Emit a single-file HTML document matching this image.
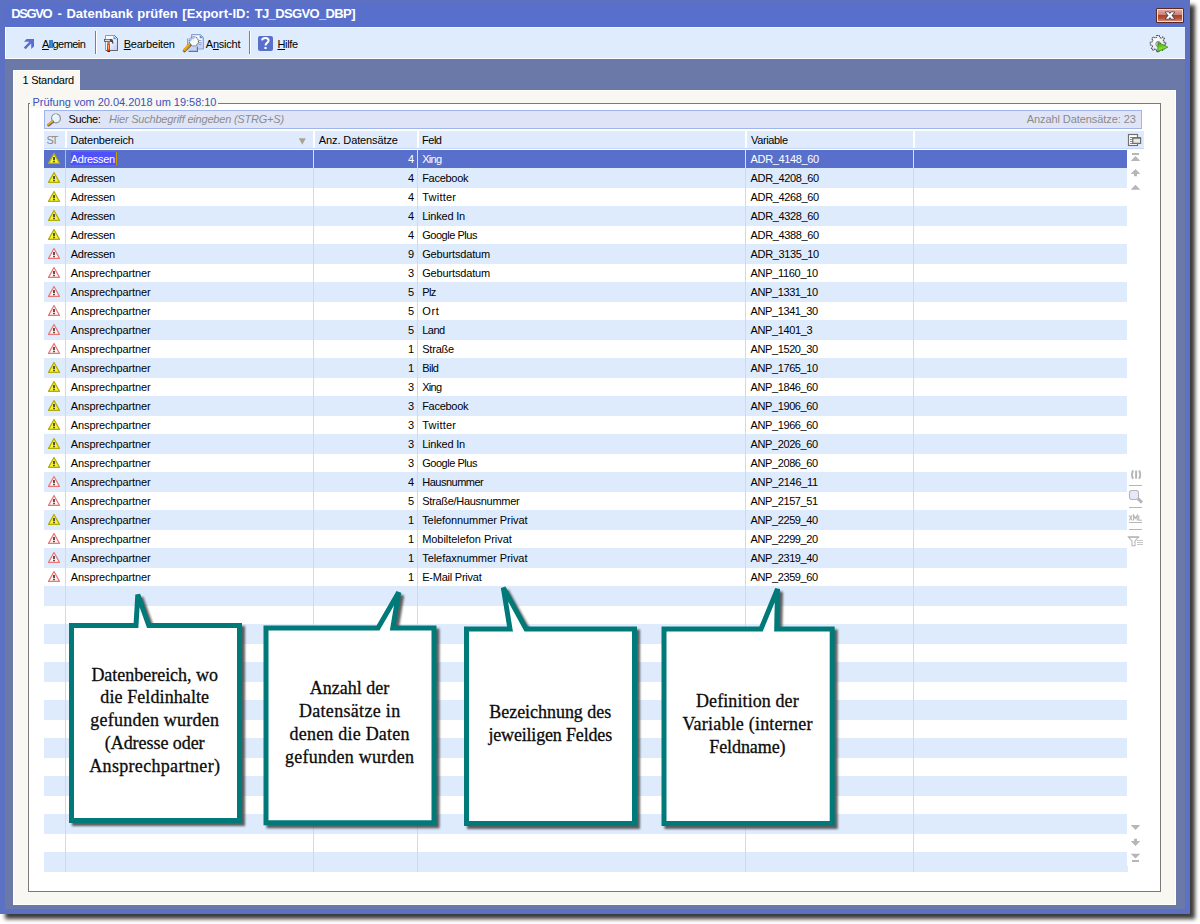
<!DOCTYPE html>
<html><head><meta charset="utf-8"><title>DSGVO - Datenbank prüfen</title>
<style>
*{margin:0;padding:0;box-sizing:border-box}
html,body{width:1200px;height:924px;overflow:hidden;background:#fff}
body{position:relative;font-family:"Liberation Sans",sans-serif;font-size:11px;color:#000}
.a{position:absolute}
.t{position:absolute;white-space:nowrap;line-height:13px;height:13px}
.row{position:absolute;left:44px;width:1083px;height:19px}
.alt{background:#deebfd}
.sel{background:#5870cc;color:#fff}
.c{position:absolute;top:3px;white-space:nowrap;line-height:13px}
.vl{position:absolute;top:150px;height:722px;width:1px;background:#cbd9fa}
.hs{position:absolute;top:131px;height:17px;width:2px;background:#fff}
.co{position:absolute;font-family:"Liberation Serif",serif;font-size:18px;line-height:23px;height:23px;color:#0c0c0c;white-space:nowrap;-webkit-text-stroke:0.3px #0c0c0c}
u{text-decoration:underline;text-underline-offset:1px}
</style></head><body>

<div class="a" id="win" style="left:0;top:0;width:1190px;height:914px;background:#5c70c4;box-shadow:4.5px 4.5px 4px #3e3c38"></div>
<div class="a" id="title" style="left:5px;top:5px;width:1180px;height:22px;background:#5870cc"></div>
<div class="t" style="left:11.3px;top:6px;font-size:13px;font-weight:bold;color:#fff;line-height:16px;height:16px;letter-spacing:-1.417px;">DSGVO</div>
<div class="t" style="left:57.5px;top:6px;font-size:13px;font-weight:bold;color:#fff;line-height:16px;height:16px;">-</div>
<div class="t" style="left:66.4px;top:6px;font-size:13px;font-weight:bold;color:#fff;line-height:16px;height:16px;letter-spacing:0.016px;">Datenbank</div>
<div class="t" style="left:137.2px;top:6px;font-size:13px;font-weight:bold;color:#fff;line-height:16px;height:16px;letter-spacing:0.009px;">prüfen</div>
<div class="t" style="left:182.3px;top:6px;font-size:13px;font-weight:bold;color:#fff;line-height:16px;height:16px;letter-spacing:0.033px;">[Export-ID:</div>
<div class="t" style="left:254.7px;top:6px;font-size:13px;font-weight:bold;color:#fff;line-height:16px;height:16px;letter-spacing:-0.631px;">TJ_DSGVO_DBP]</div>
<div class="a" style="left:1156px;top:8px;width:28px;height:15px;background:#5a2a20;border-radius:1.5px"></div>
<div class="a" style="left:1157px;top:9px;width:26px;height:13px;background:#f8d8d0"></div>
<div class="a" style="left:1158px;top:10px;width:24px;height:11px;background:linear-gradient(#e0a8a0 0%,#cc8070 45%,#b04028 50%,#b85038 75%,#d08870 100%)"></div>
<svg class="a" style="left:1163px;top:10px" width="14" height="11" viewBox="0 0 14 11"><path d="M2.8 2.3 H5.6 L7 3.9 L8.4 2.3 H11.2 L8.5 5.5 L11.2 8.7 H8.4 L7 7.1 L5.6 8.7 H2.8 L5.5 5.5 Z" fill="#fff" stroke="#54464e" stroke-width="1.7" stroke-linejoin="round" paint-order="stroke"/></svg>

<div class="a" id="tb" style="left:5px;top:27px;width:1180px;height:32px;background:#dfecfd;border:1px solid #fff;border-top-color:#f2f7ff;border-right:none"></div>
<svg class="a" style="left:0;top:0" width="1200" height="62" viewBox="0 0 1200 62">
<defs><linearGradient id="pg" x1="0" y1="0" x2="1" y2="1"><stop offset="0" stop-color="#ffffff"/><stop offset="0.45" stop-color="#f4f6ff"/><stop offset="1" stop-color="#b8c4f4"/></linearGradient>
<linearGradient id="hd" x1="0" y1="0" x2="0" y2="1"><stop offset="0" stop-color="#ff4a10"/><stop offset="1" stop-color="#e82000"/></linearGradient>
<radialGradient id="gr" cx="0.4" cy="0.35" r="0.7"><stop offset="0" stop-color="#ffffff"/><stop offset="0.6" stop-color="#e8ecf4"/><stop offset="1" stop-color="#9ca4c0"/></radialGradient>
<linearGradient id="pl" x1="0" y1="0" x2="0.3" y2="1"><stop offset="0" stop-color="#3c9a08"/><stop offset="0.7" stop-color="#7ee030"/><stop offset="1" stop-color="#4cb010"/></linearGradient>
</defs>
<polygon points="26.6,39 34,39 34,46.4 31.2,49 31.2,43.6 25.6,49.2 23.8,47.4 29.4,41.8 24,41.8" fill="#5870cc"/>
<rect x="95" y="31" width="1" height="23" fill="#808080"/><rect x="96" y="31" width="1" height="23" fill="#fff"/>
<rect x="249" y="31" width="1" height="23" fill="#808080"/><rect x="250" y="31" width="1" height="23" fill="#fff"/>
<path d="M105.5 35.5 H114.5 L117.5 38.5 V50.5 H105.5 Z" fill="url(#pg)" stroke="#8098e0" stroke-width="1"/>
<path d="M114.5 35.5 L117.5 38.5 V50.5 H106" fill="none" stroke="#686868" stroke-width="1"/>
<path d="M113.5 36 V39.2 H117" fill="#5c9cf0" stroke="none"/>
<path d="M104 39 H111.5 Q113.4 39.2 113.4 43.8 L112.2 43.6 Q112.4 41.8 110.5 41.8 H104 Z" fill="#484848"/>
<rect x="104.8" y="39.7" width="5" height="1.2" fill="#f4f4f4"/>
<rect x="107.2" y="41.8" width="2.6" height="2.4" fill="#888"/>
<path d="M107 44 H110 V51.2 L109.6 52 H107.4 L107 51.2 Z" fill="url(#hd)"/>
<rect x="108.1" y="45" width="0.8" height="4.6" fill="#ffc860"/>
<rect x="108" y="51" width="2" height="1" fill="#202020"/>
<path d="M191.5 34.5 H200.5 L203.5 37.5 V49 H191.5 Z" fill="#c4d4f8" stroke="#8aa0d8" stroke-width="1"/>
<rect x="193" y="35.6" width="6.6" height="6" fill="#fff"/>
<path d="M199.8 35.2 V38 H203" fill="#3c9cc8"/>
<rect x="199.4" y="38.6" width="2.6" height="3" fill="#fcfce4"/>
<path d="M199 40.5 H201.4 M199 42.6 H201.4 M199 44.6 H201.4" stroke="#8aa0d8" stroke-width="0.9"/>
<path d="M187.5 38.5 H197.5 V51.2 H188.2" fill="#c4d4f8" stroke="none"/>
<path d="M187.5 38.5 V47" stroke="#8aa0d8" stroke-width="1" fill="none"/>
<path d="M188.5 51.3 H197.4 V46.5" stroke="#6870a8" stroke-width="1.2" fill="none"/>
<circle cx="193.9" cy="41.4" r="4.6" fill="#f4f8ff" stroke="#6c7060" stroke-width="1.1" stroke-dasharray="1.2 0.6"/>
<path d="M190.2 41 Q191 37.8 194.6 37.6" stroke="#a8c0f0" stroke-width="1.6" fill="none"/>
<path d="M189.6 45.2 L184.4 50.6" stroke="#6c6838" stroke-width="3.4" stroke-linecap="round"/>
<path d="M189.2 44.6 L184 50" stroke="#f8a810" stroke-width="2" stroke-linecap="round"/>
<path d="M190 45.8 L185 51" stroke="#9890e0" stroke-width="0.9"/>
<rect x="258" y="36" width="15" height="15" rx="2" fill="#5870cc"/>
<path d="M262 40.4 Q262.4 38 265.4 38 Q268.6 38 268.6 40.6 Q268.6 42 266.8 43.2 Q265.6 44 265.6 45.6" fill="none" stroke="#fff" stroke-width="2"/>
<rect x="264.4" y="47" width="2.2" height="2" fill="#fff"/>
<g transform="translate(1158,43.4) scale(0.9,0.95)">
<path d="M-1.4 -8.4 L1.4 -8.4 L1.9 -6.2 L3.6 -5.5 L5.4 -6.9 L7.3 -4.9 L5.9 -3.1 L6.5 -1.5 L8.6 -1 L8.6 1.6 L6.4 2 L5.7 3.7 L7 5.5 L5 7.4 L3.2 6.1 L1.6 6.7 L1.2 8.8 L-1.5 8.8 L-1.9 6.7 L-3.6 6 L-5.4 7.3 L-7.3 5.4 L-6 3.6 L-6.6 2 L-8.6 1.5 L-8.6 -1.2 L-6.5 -1.6 L-5.8 -3.2 L-7.1 -5 L-5.2 -6.9 L-3.4 -5.6 L-1.8 -6.3 Z" fill="url(#gr)" stroke="#4c4c4c" stroke-width="1.1" stroke-dasharray="1.8 0.8"/>
<circle cx="0.2" cy="0.6" r="2.6" fill="#f8f8ff" stroke="#606060" stroke-width="0.9"/>
</g>
<path d="M1157.8 42.2 L1168 47.2 L1157.8 51.8 Z" fill="url(#pl)" stroke="#2c7a00" stroke-width="0.6" stroke-linejoin="round"/>
</svg>

<div class="t tb" style="left:42px;top:38px;letter-spacing:-0.564px;"><u>A</u>llgemein</div>
<div class="t tb" style="left:123.7px;top:38px;letter-spacing:-0.213px;"><u>B</u>earbeiten</div>
<div class="t tb" style="left:205.8px;top:38px;letter-spacing:-0.23px;">A<u>n</u>sicht</div>
<div class="t tb" style="left:277.5px;top:38px;letter-spacing:-0.379px;"><u>H</u>ilfe</div>
<div class="a" id="gb" style="left:5px;top:59px;width:1180px;height:850px;background:#6a79a8"></div>
<div class="a" id="panel" style="left:13px;top:90px;width:1163px;height:815px;background:#f8f7f2;border-right:1px solid #fff;border-bottom:1px solid #fff;border-left:1px solid #fdfdfb;border-top:1px solid #fdfdfb"></div>
<div class="a" id="tab" style="left:13px;top:70px;width:67px;height:21px;background:#f8f7f2;border-top:1px solid #fdfdfb;border-left:1px solid #fdfdfb"></div>
<div class="t" id="tabt" style="left:22.5px;top:74px;letter-spacing:-0.236px;">1 Standard</div>
<div class="a" id="grp" style="left:28px;top:103px;width:1133px;height:789px;background:#fff;border:1px solid #7a7a7a"></div>
<div class="a" style="left:30px;top:97px;width:188px;height:11px;background:#f8f7f2"></div>
<div class="t" id="grpt" style="left:32.5px;top:96px;color:#3c50c0;letter-spacing:-0.021px;">Prüfung vom 20.04.2018 um 19:58:10</div>
<div class="a" id="sb" style="left:44px;top:110px;width:1098px;height:19px;background:#dfe5f6;border:1px solid #9fb6ec"></div>
<svg class="a" style="left:46px;top:112px" width="17" height="16" viewBox="46 112 17 16">
<circle cx="56" cy="118.4" r="4.4" fill="#e4f4ff" stroke="#8c9098" stroke-width="1.2"/>
<path d="M53 117.6 Q53.8 115.2 56.6 115" stroke="#fff" stroke-width="1.4" fill="none"/>
<path d="M52.6 121.8 L48.6 125" stroke="#6c6c6c" stroke-width="3" stroke-linecap="round"/>
<path d="M52.2 121.2 L48.2 124.4" stroke="#f8a820" stroke-width="1.8" stroke-linecap="round"/>
</svg>

<div class="t" id="such" style="left:68.5px;top:113px;letter-spacing:-0.39px;">Suche:</div>
<div class="t" id="hint" style="left:109px;top:113px;font-style:italic;color:#8c8c8c;letter-spacing:-0.206px;">Hier Suchbegriff eingeben (STRG+S)</div>
<div class="t" id="anz" style="left:1026.7px;top:113px;color:#8a8a8a;letter-spacing:-0.079px;">Anzahl Datensätze: 23</div>
<div class="a" id="hdr" style="left:44px;top:131px;width:1100px;height:17px;background:#dfebfd"></div>
<div class="a" style="left:44px;top:148px;width:1100px;height:1px;background:#c8d8fa"></div>
<div class="hs" style="left:65px"></div>
<div class="hs" style="left:313px"></div>
<div class="hs" style="left:417px"></div>
<div class="hs" style="left:745px"></div>
<div class="hs" style="left:913px"></div>
<div class="t" style="left:46.6px;top:134px;color:#8a8a8a;letter-spacing:-2.262px;">ST</div>
<div class="t hd" style="left:70.4px;top:134px;letter-spacing:-0.176px;">Datenbereich</div>
<div class="t hd" style="left:318.75px;top:134px;letter-spacing:-0.105px;">Anz. Datensätze</div>
<div class="t hd" style="left:422px;top:134px;letter-spacing:-0.469px;">Feld</div>
<div class="t hd" style="left:751px;top:134px;letter-spacing:-0.364px;">Variable</div>
<svg class="a" style="left:298px;top:138px" width="9" height="7" viewBox="0 0 9 7"><path d="M0.8 0.3 L7.8 0.3 L4.3 6.8 Z" fill="#a8a490"/></svg>
<div class="row sel" style="top:150px;height:18px"><svg class="a" style="left:3px;top:2px" width="14" height="13"><path d="M7 1.5 L12.5 11.4 L1.5 11.4 Z" fill="#f8f430" stroke="#b0ac08" stroke-width="1.2" stroke-linejoin="round"/><path d="M7 5 V8.2 M7 9 V10.2" stroke="#404040" stroke-width="1.8"/></svg><span class="c" style="right:713px;top:3px">4</span><span class="c" style="left:378.2px;top:3px;letter-spacing:-0.677px;">Xing</span><span class="c" style="left:706.6px;top:3px;letter-spacing:-0.357px;">ADR_4148_60</span></div>
<div class="row alt" style="top:168px;height:20px"><svg class="a" style="left:3px;top:3px" width="14" height="13"><path d="M7 1.5 L12.5 11.4 L1.5 11.4 Z" fill="#f8f430" stroke="#b0ac08" stroke-width="1.2" stroke-linejoin="round"/><path d="M7 5 V8.2 M7 9 V10.2" stroke="#404040" stroke-width="1.8"/></svg><span class="c" style="left:26.8px;top:4px;letter-spacing:-0.298px;">Adressen</span><span class="c" style="right:713px;top:4px">4</span><span class="c" style="left:378.2px;top:4px;letter-spacing:-0.288px;">Facebook</span><span class="c" style="left:706.6px;top:4px;letter-spacing:-0.357px;">ADR_4208_60</span></div>
<div class="row" style="top:188px;height:19px"><svg class="a" style="left:3px;top:2px" width="14" height="13"><path d="M7 1.5 L12.5 11.4 L1.5 11.4 Z" fill="#f8f430" stroke="#b0ac08" stroke-width="1.2" stroke-linejoin="round"/><path d="M7 5 V8.2 M7 9 V10.2" stroke="#404040" stroke-width="1.8"/></svg><span class="c" style="left:26.8px;top:3px;letter-spacing:-0.298px;">Adressen</span><span class="c" style="right:713px;top:3px">4</span><span class="c" style="left:378.2px;top:3px;letter-spacing:0.232px;">Twitter</span><span class="c" style="left:706.6px;top:3px;letter-spacing:-0.357px;">ADR_4268_60</span></div>
<div class="row alt" style="top:206px;height:20px"><svg class="a" style="left:3px;top:3px" width="14" height="13"><path d="M7 1.5 L12.5 11.4 L1.5 11.4 Z" fill="#f8f430" stroke="#b0ac08" stroke-width="1.2" stroke-linejoin="round"/><path d="M7 5 V8.2 M7 9 V10.2" stroke="#404040" stroke-width="1.8"/></svg><span class="c" style="left:26.8px;top:4px;letter-spacing:-0.298px;">Adressen</span><span class="c" style="right:713px;top:4px">4</span><span class="c" style="left:378.2px;top:4px;letter-spacing:-0.207px;">Linked In</span><span class="c" style="left:706.6px;top:4px;letter-spacing:-0.357px;">ADR_4328_60</span></div>
<div class="row" style="top:226px;height:19px"><svg class="a" style="left:3px;top:2px" width="14" height="13"><path d="M7 1.5 L12.5 11.4 L1.5 11.4 Z" fill="#f8f430" stroke="#b0ac08" stroke-width="1.2" stroke-linejoin="round"/><path d="M7 5 V8.2 M7 9 V10.2" stroke="#404040" stroke-width="1.8"/></svg><span class="c" style="left:26.8px;top:3px;letter-spacing:-0.298px;">Adressen</span><span class="c" style="right:713px;top:3px">4</span><span class="c" style="left:378.2px;top:3px;letter-spacing:-0.464px;">Google Plus</span><span class="c" style="left:706.6px;top:3px;letter-spacing:-0.357px;">ADR_4388_60</span></div>
<div class="row alt" style="top:244px;height:20px"><svg class="a" style="left:3px;top:3px" width="14" height="13"><path d="M7 1.5 L12.5 11.4 L1.5 11.4 Z" fill="#fff4f4" stroke="#ea7676" stroke-width="1.2" stroke-linejoin="round"/><path d="M7 5 V8.2 M7 9 V10.2" stroke="#504040" stroke-width="1.8"/></svg><span class="c" style="left:26.8px;top:4px;letter-spacing:-0.298px;">Adressen</span><span class="c" style="right:713px;top:4px">9</span><span class="c" style="left:378.2px;top:4px;letter-spacing:-0.155px;">Geburtsdatum</span><span class="c" style="left:706.6px;top:4px;letter-spacing:-0.357px;">ADR_3135_10</span></div>
<div class="row" style="top:264px;height:19px"><svg class="a" style="left:3px;top:2px" width="14" height="13"><path d="M7 1.5 L12.5 11.4 L1.5 11.4 Z" fill="#fff4f4" stroke="#ea7676" stroke-width="1.2" stroke-linejoin="round"/><path d="M7 5 V8.2 M7 9 V10.2" stroke="#504040" stroke-width="1.8"/></svg><span class="c" style="left:26.8px;top:3px;letter-spacing:-0.102px;">Ansprechpartner</span><span class="c" style="right:713px;top:3px">3</span><span class="c" style="left:378.2px;top:3px;letter-spacing:-0.155px;">Geburtsdatum</span><span class="c" style="left:706.6px;top:3px;letter-spacing:-0.325px;">ANP_1160_10</span></div>
<div class="row alt" style="top:282px;height:20px"><svg class="a" style="left:3px;top:3px" width="14" height="13"><path d="M7 1.5 L12.5 11.4 L1.5 11.4 Z" fill="#fff4f4" stroke="#ea7676" stroke-width="1.2" stroke-linejoin="round"/><path d="M7 5 V8.2 M7 9 V10.2" stroke="#504040" stroke-width="1.8"/></svg><span class="c" style="left:26.8px;top:4px;letter-spacing:-0.102px;">Ansprechpartner</span><span class="c" style="right:713px;top:4px">5</span><span class="c" style="left:378.2px;top:4px;letter-spacing:-0.641px;">Plz</span><span class="c" style="left:706.6px;top:4px;letter-spacing:-0.406px;">ANP_1331_10</span></div>
<div class="row" style="top:302px;height:19px"><svg class="a" style="left:3px;top:2px" width="14" height="13"><path d="M7 1.5 L12.5 11.4 L1.5 11.4 Z" fill="#fff4f4" stroke="#ea7676" stroke-width="1.2" stroke-linejoin="round"/><path d="M7 5 V8.2 M7 9 V10.2" stroke="#504040" stroke-width="1.8"/></svg><span class="c" style="left:26.8px;top:3px;letter-spacing:-0.102px;">Ansprechpartner</span><span class="c" style="right:713px;top:3px">5</span><span class="c" style="left:378.2px;top:3px;letter-spacing:0.659px;">Ort</span><span class="c" style="left:706.6px;top:3px;letter-spacing:-0.406px;">ANP_1341_30</span></div>
<div class="row alt" style="top:320px;height:20px"><svg class="a" style="left:3px;top:3px" width="14" height="13"><path d="M7 1.5 L12.5 11.4 L1.5 11.4 Z" fill="#fff4f4" stroke="#ea7676" stroke-width="1.2" stroke-linejoin="round"/><path d="M7 5 V8.2 M7 9 V10.2" stroke="#504040" stroke-width="1.8"/></svg><span class="c" style="left:26.8px;top:4px;letter-spacing:-0.102px;">Ansprechpartner</span><span class="c" style="right:713px;top:4px">5</span><span class="c" style="left:378.2px;top:4px;letter-spacing:-0.495px;">Land</span><span class="c" style="left:706.6px;top:4px;letter-spacing:-0.384px;">ANP_1401_3</span></div>
<div class="row" style="top:340px;height:19px"><svg class="a" style="left:3px;top:2px" width="14" height="13"><path d="M7 1.5 L12.5 11.4 L1.5 11.4 Z" fill="#fff4f4" stroke="#ea7676" stroke-width="1.2" stroke-linejoin="round"/><path d="M7 5 V8.2 M7 9 V10.2" stroke="#504040" stroke-width="1.8"/></svg><span class="c" style="left:26.8px;top:3px;letter-spacing:-0.102px;">Ansprechpartner</span><span class="c" style="right:713px;top:3px">1</span><span class="c" style="left:378.2px;top:3px;letter-spacing:-0.203px;">Straße</span><span class="c" style="left:706.6px;top:3px;letter-spacing:-0.406px;">ANP_1520_30</span></div>
<div class="row alt" style="top:358px;height:20px"><svg class="a" style="left:3px;top:3px" width="14" height="13"><path d="M7 1.5 L12.5 11.4 L1.5 11.4 Z" fill="#f8f430" stroke="#b0ac08" stroke-width="1.2" stroke-linejoin="round"/><path d="M7 5 V8.2 M7 9 V10.2" stroke="#404040" stroke-width="1.8"/></svg><span class="c" style="left:26.8px;top:4px;letter-spacing:-0.102px;">Ansprechpartner</span><span class="c" style="right:713px;top:4px">1</span><span class="c" style="left:378.2px;top:4px;letter-spacing:-0.515px;">Bild</span><span class="c" style="left:706.6px;top:4px;letter-spacing:-0.406px;">ANP_1765_10</span></div>
<div class="row" style="top:378px;height:19px"><svg class="a" style="left:3px;top:2px" width="14" height="13"><path d="M7 1.5 L12.5 11.4 L1.5 11.4 Z" fill="#f8f430" stroke="#b0ac08" stroke-width="1.2" stroke-linejoin="round"/><path d="M7 5 V8.2 M7 9 V10.2" stroke="#404040" stroke-width="1.8"/></svg><span class="c" style="left:26.8px;top:3px;letter-spacing:-0.102px;">Ansprechpartner</span><span class="c" style="right:713px;top:3px">3</span><span class="c" style="left:378.2px;top:3px;letter-spacing:-0.677px;">Xing</span><span class="c" style="left:706.6px;top:3px;letter-spacing:-0.406px;">ANP_1846_60</span></div>
<div class="row alt" style="top:396px;height:20px"><svg class="a" style="left:3px;top:3px" width="14" height="13"><path d="M7 1.5 L12.5 11.4 L1.5 11.4 Z" fill="#f8f430" stroke="#b0ac08" stroke-width="1.2" stroke-linejoin="round"/><path d="M7 5 V8.2 M7 9 V10.2" stroke="#404040" stroke-width="1.8"/></svg><span class="c" style="left:26.8px;top:4px;letter-spacing:-0.102px;">Ansprechpartner</span><span class="c" style="right:713px;top:4px">3</span><span class="c" style="left:378.2px;top:4px;letter-spacing:-0.288px;">Facebook</span><span class="c" style="left:706.6px;top:4px;letter-spacing:-0.406px;">ANP_1906_60</span></div>
<div class="row" style="top:416px;height:19px"><svg class="a" style="left:3px;top:2px" width="14" height="13"><path d="M7 1.5 L12.5 11.4 L1.5 11.4 Z" fill="#f8f430" stroke="#b0ac08" stroke-width="1.2" stroke-linejoin="round"/><path d="M7 5 V8.2 M7 9 V10.2" stroke="#404040" stroke-width="1.8"/></svg><span class="c" style="left:26.8px;top:3px;letter-spacing:-0.102px;">Ansprechpartner</span><span class="c" style="right:713px;top:3px">3</span><span class="c" style="left:378.2px;top:3px;letter-spacing:0.232px;">Twitter</span><span class="c" style="left:706.6px;top:3px;letter-spacing:-0.406px;">ANP_1966_60</span></div>
<div class="row alt" style="top:434px;height:20px"><svg class="a" style="left:3px;top:3px" width="14" height="13"><path d="M7 1.5 L12.5 11.4 L1.5 11.4 Z" fill="#f8f430" stroke="#b0ac08" stroke-width="1.2" stroke-linejoin="round"/><path d="M7 5 V8.2 M7 9 V10.2" stroke="#404040" stroke-width="1.8"/></svg><span class="c" style="left:26.8px;top:4px;letter-spacing:-0.102px;">Ansprechpartner</span><span class="c" style="right:713px;top:4px">3</span><span class="c" style="left:378.2px;top:4px;letter-spacing:-0.207px;">Linked In</span><span class="c" style="left:706.6px;top:4px;letter-spacing:-0.406px;">ANP_2026_60</span></div>
<div class="row" style="top:454px;height:19px"><svg class="a" style="left:3px;top:2px" width="14" height="13"><path d="M7 1.5 L12.5 11.4 L1.5 11.4 Z" fill="#f8f430" stroke="#b0ac08" stroke-width="1.2" stroke-linejoin="round"/><path d="M7 5 V8.2 M7 9 V10.2" stroke="#404040" stroke-width="1.8"/></svg><span class="c" style="left:26.8px;top:3px;letter-spacing:-0.102px;">Ansprechpartner</span><span class="c" style="right:713px;top:3px">3</span><span class="c" style="left:378.2px;top:3px;letter-spacing:-0.464px;">Google Plus</span><span class="c" style="left:706.6px;top:3px;letter-spacing:-0.406px;">ANP_2086_60</span></div>
<div class="row alt" style="top:472px;height:20px"><svg class="a" style="left:3px;top:3px" width="14" height="13"><path d="M7 1.5 L12.5 11.4 L1.5 11.4 Z" fill="#fff4f4" stroke="#ea7676" stroke-width="1.2" stroke-linejoin="round"/><path d="M7 5 V8.2 M7 9 V10.2" stroke="#504040" stroke-width="1.8"/></svg><span class="c" style="left:26.8px;top:4px;letter-spacing:-0.102px;">Ansprechpartner</span><span class="c" style="right:713px;top:4px">4</span><span class="c" style="left:378.2px;top:4px;letter-spacing:-0.492px;">Hausnummer</span><span class="c" style="left:706.6px;top:4px;letter-spacing:-0.325px;">ANP_2146_11</span></div>
<div class="row" style="top:492px;height:19px"><svg class="a" style="left:3px;top:2px" width="14" height="13"><path d="M7 1.5 L12.5 11.4 L1.5 11.4 Z" fill="#fff4f4" stroke="#ea7676" stroke-width="1.2" stroke-linejoin="round"/><path d="M7 5 V8.2 M7 9 V10.2" stroke="#504040" stroke-width="1.8"/></svg><span class="c" style="left:26.8px;top:3px;letter-spacing:-0.102px;">Ansprechpartner</span><span class="c" style="right:713px;top:3px">5</span><span class="c" style="left:378.2px;top:3px;letter-spacing:-0.287px;">Straße/Hausnummer</span><span class="c" style="left:706.6px;top:3px;letter-spacing:-0.406px;">ANP_2157_51</span></div>
<div class="row alt" style="top:510px;height:20px"><svg class="a" style="left:3px;top:3px" width="14" height="13"><path d="M7 1.5 L12.5 11.4 L1.5 11.4 Z" fill="#f8f430" stroke="#b0ac08" stroke-width="1.2" stroke-linejoin="round"/><path d="M7 5 V8.2 M7 9 V10.2" stroke="#404040" stroke-width="1.8"/></svg><span class="c" style="left:26.8px;top:4px;letter-spacing:-0.102px;">Ansprechpartner</span><span class="c" style="right:713px;top:4px">1</span><span class="c" style="left:378.2px;top:4px;letter-spacing:-0.089px;">Telefonnummer Privat</span><span class="c" style="left:706.6px;top:4px;letter-spacing:-0.406px;">ANP_2259_40</span></div>
<div class="row" style="top:530px;height:19px"><svg class="a" style="left:3px;top:2px" width="14" height="13"><path d="M7 1.5 L12.5 11.4 L1.5 11.4 Z" fill="#fff4f4" stroke="#ea7676" stroke-width="1.2" stroke-linejoin="round"/><path d="M7 5 V8.2 M7 9 V10.2" stroke="#504040" stroke-width="1.8"/></svg><span class="c" style="left:26.8px;top:3px;letter-spacing:-0.102px;">Ansprechpartner</span><span class="c" style="right:713px;top:3px">1</span><span class="c" style="left:378.2px;top:3px;letter-spacing:-0.05px;">Mobiltelefon Privat</span><span class="c" style="left:706.6px;top:3px;letter-spacing:-0.406px;">ANP_2299_20</span></div>
<div class="row alt" style="top:548px;height:20px"><svg class="a" style="left:3px;top:3px" width="14" height="13"><path d="M7 1.5 L12.5 11.4 L1.5 11.4 Z" fill="#fff4f4" stroke="#ea7676" stroke-width="1.2" stroke-linejoin="round"/><path d="M7 5 V8.2 M7 9 V10.2" stroke="#504040" stroke-width="1.8"/></svg><span class="c" style="left:26.8px;top:4px;letter-spacing:-0.102px;">Ansprechpartner</span><span class="c" style="right:713px;top:4px">1</span><span class="c" style="left:378.2px;top:4px;letter-spacing:-0.057px;">Telefaxnummer Privat</span><span class="c" style="left:706.6px;top:4px;letter-spacing:-0.406px;">ANP_2319_40</span></div>
<div class="row" style="top:568px;height:19px"><svg class="a" style="left:3px;top:2px" width="14" height="13"><path d="M7 1.5 L12.5 11.4 L1.5 11.4 Z" fill="#fff4f4" stroke="#ea7676" stroke-width="1.2" stroke-linejoin="round"/><path d="M7 5 V8.2 M7 9 V10.2" stroke="#504040" stroke-width="1.8"/></svg><span class="c" style="left:26.8px;top:3px;letter-spacing:-0.102px;">Ansprechpartner</span><span class="c" style="right:713px;top:3px">1</span><span class="c" style="left:378.2px;top:3px;letter-spacing:-0.229px;">E-Mail Privat</span><span class="c" style="left:706.6px;top:3px;letter-spacing:-0.406px;">ANP_2359_60</span></div>
<div class="row alt" style="top:586px;height:20px"></div>
<div class="row alt" style="top:624px;height:20px"></div>
<div class="row alt" style="top:662px;height:20px"></div>
<div class="row alt" style="top:700px;height:20px"></div>
<div class="row alt" style="top:738px;height:20px"></div>
<div class="row alt" style="top:776px;height:20px"></div>
<div class="row alt" style="top:814px;height:20px"></div>
<div class="row alt" style="top:852px;height:20px"></div>
<div class="a alt" style="left:1127px;top:866px;width:1px;height:6px"></div>
<div class="a" style="left:71px;top:152px;width:45px;height:13px;background:#5050fc"></div>
<div class="t" style="left:70.8px;top:153px;color:#fff;letter-spacing:-0.298px;">Adressen</div>
<div class="a" style="left:116px;top:152px;width:1px;height:13px;background:#c8a000"></div>
<div class="vl" style="left:65px"></div>
<div class="vl" style="left:313px"></div>
<div class="vl" style="left:417px"></div>
<div class="vl" style="left:745px"></div>
<div class="vl" style="left:913px"></div>
<div class="a" style="left:65px;top:150px;width:1px;height:18px;background:#a8b8f0"></div>
<div class="a" style="left:313px;top:150px;width:1px;height:18px;background:#d4defa"></div>
<div class="a" style="left:417px;top:150px;width:1px;height:18px;background:#d4defa"></div>
<div class="a" style="left:745px;top:150px;width:1px;height:18px;background:#d4defa"></div>
<div class="a" style="left:913px;top:150px;width:1px;height:18px;background:#d4defa"></div>
<svg class="a" style="left:1120px;top:128px" width="30" height="750" viewBox="1120 128 30 750">
<rect x="1128.5" y="134.5" width="9" height="11" fill="#fff" stroke="#707070" stroke-width="1.2"/>
<path d="M1130 137.5 H1133 M1130 139.5 H1133 M1130 141.5 H1133 M1130 143.5 H1133" stroke="#808080" stroke-width="0.9"/>
<rect x="1132.8" y="137.8" width="7.8" height="5.6" fill="#e8e8e0" stroke="#707070" stroke-width="1.2"/>
<rect x="1132.4" y="137.2" width="8.6" height="1.4" fill="#707070"/>
<g fill="#b6b6b6">
<rect x="1132" y="153" width="7" height="2"/><path d="M1135.5 156 L1140.3 161 H1130.7 Z"/>
<path d="M1135.5 169 L1140.3 174 H1137 V176.2 H1134 V174 H1130.7 Z"/>
<path d="M1135.5 184.8 L1140.3 189.8 H1130.7 Z"/>
<path d="M1130.7 825 H1140.3 L1135.5 830 Z"/>
<path d="M1134 838.8 H1137 V841 H1140.3 L1135.5 846 L1130.7 841 H1134 Z"/>
<path d="M1130.7 853.8 H1140.3 L1135.5 858.6 Z"/><rect x="1132" y="860" width="7" height="2"/>
<rect x="1129" y="485" width="13" height="1"/><rect x="1129" y="507" width="13" height="1"/><rect x="1129" y="529" width="13" height="1"/>
<rect x="1129" y="522" width="13" height="1"/>
</g>
<g fill="none" stroke="#b6b6b6">
<path d="M1133 470.4 Q1131 474.6 1133 478.8 M1139.2 470.4 Q1141.2 474.6 1139.2 478.8" stroke-width="1.9"/>
<path d="M1136.1 470.6 V478.6" stroke-width="2"/>
<rect x="1129.5" y="490.5" width="9" height="9" rx="2.5" fill="#e8e8fc" stroke-width="1.1"/>
<path d="M1138 498.6 L1142 502.6" stroke-width="3"/>
<path d="M1129.2 515.3 L1132.3 520.5 M1132.3 515.3 L1129.2 520.5 M1133.6 520.6 V515.4 L1135.4 518.4 L1137.2 515.4 V520.6 M1138.8 515.3 V520.2 H1141.8" stroke-width="1.15"/>
<path d="M1128.4 537 H1138.6 L1135 541 V545.8 H1132 V541 Z" stroke-width="1.1"/>
<path d="M1137 540.5 H1143 M1137 542.5 H1143 M1137 544.5 H1143" stroke-width="0.8"/>
</g>
<rect x="1128.2" y="536.4" width="10.6" height="1.4" fill="#b6b6b6"/>
</svg>

<svg width="0" height="0" style="position:absolute"><defs><filter id="bl" x="-10%" y="-10%" width="120%" height="120%"><feGaussianBlur stdDeviation="1"/></filter></defs></svg>
<svg class="a" style="left:0;top:0;overflow:visible" width="1200" height="924"><path d="M71.5 625.5 L136 625.5 L137.8 594.6 L148.8 625.5 L239.5 625.5 L239.5 820.5 L71.5 820.5 Z" transform="translate(3,3)" fill="#444" stroke="#444" stroke-width="5" opacity="0.85" filter="url(#bl)"/><path d="M71.5 625.5 L136 625.5 L137.8 594.6 L148.8 625.5 L239.5 625.5 L239.5 820.5 L71.5 820.5 Z" fill="#fff" stroke="#007a78" stroke-width="5"/></svg>
<div class="co" style="left:91.4px;top:663.6px;letter-spacing:-0.024px;">Datenbereich, wo</div>
<div class="co" style="left:100.3px;top:686.4px;letter-spacing:0.094px;">die Feldinhalte</div>
<div class="co" style="left:90.2px;top:709.2px;letter-spacing:0.245px;">gefunden wurden</div>
<div class="co" style="left:104.8px;top:732.0px;letter-spacing:-0.056px;">(Adresse oder</div>
<div class="co" style="left:89.3px;top:755.0px;letter-spacing:0.316px;">Ansprechpartner)</div>
<svg class="a" style="left:0;top:0;overflow:visible" width="1200" height="924"><path d="M266 628 L378 628 L398.7 592.3 L392.8 628 L434 628 L434 822.8 L266 822.8 Z" transform="translate(3,3)" fill="#444" stroke="#444" stroke-width="5" opacity="0.85" filter="url(#bl)"/><path d="M266 628 L378 628 L398.7 592.3 L392.8 628 L434 628 L434 822.8 L266 822.8 Z" fill="#fff" stroke="#007a78" stroke-width="5"/></svg>
<div class="co" style="left:309.7px;top:677.2px;letter-spacing:0.015px;">Anzahl der</div>
<div class="co" style="left:298.9px;top:700.1px;letter-spacing:0.316px;">Datensätze in</div>
<div class="co" style="left:289.5px;top:723.0px;letter-spacing:0.218px;">denen die Daten</div>
<div class="co" style="left:285.1px;top:745.9px;letter-spacing:0.245px;">gefunden wurden</div>
<svg class="a" style="left:0;top:0;overflow:visible" width="1200" height="924"><path d="M466.5 629 L510 629 L503.3 587.6 L526 629 L634.5 629 L634.5 823.5 L466.5 823.5 Z" transform="translate(3,3)" fill="#444" stroke="#444" stroke-width="5" opacity="0.85" filter="url(#bl)"/><path d="M466.5 629 L510 629 L503.3 587.6 L526 629 L634.5 629 L634.5 823.5 L466.5 823.5 Z" fill="#fff" stroke="#007a78" stroke-width="5"/></svg>
<div class="co" style="left:489.3px;top:701.0px;letter-spacing:-0.041px;">Bezeichnung des</div>
<div class="co" style="left:488.4px;top:723.8px;letter-spacing:-0.167px;">jeweiligen Feldes</div>
<svg class="a" style="left:0;top:0;overflow:visible" width="1200" height="924"><path d="M664 629 L761 629 L777.5 589 L776.7 629 L832.2 629 L832.2 823.5 L664 823.5 Z" transform="translate(3,3)" fill="#444" stroke="#444" stroke-width="5" opacity="0.85" filter="url(#bl)"/><path d="M664 629 L761 629 L777.5 589 L776.7 629 L832.2 629 L832.2 823.5 L664 823.5 Z" fill="#fff" stroke="#007a78" stroke-width="5"/></svg>
<div class="co" style="left:696.0px;top:690.4px;letter-spacing:0.094px;">Definition der</div>
<div class="co" style="left:682.4px;top:713.2px;letter-spacing:0.21px;">Variable (interner</div>
<div class="co" style="left:709.3px;top:736.1px;letter-spacing:-0.092px;">Feldname)</div>
</body></html>
